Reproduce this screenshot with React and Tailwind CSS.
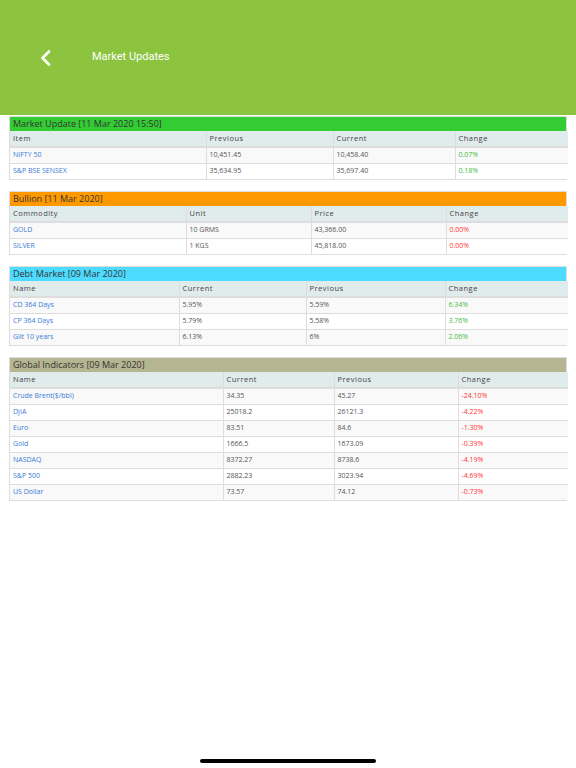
const font = { fontFamily: '"Open Sans", "Noto Sans", sans-serif' }

const sections = [
  {
    title: 'Market Update [11 Mar 2020 15:50]',
    bar: 'bg-[#33cc33]',
    cols: ['w-[196px]', 'w-[127px]', 'w-[122px]', 'w-[113px]'],
    head: ['Item', 'Previous', 'Current', 'Change'],
    rows: [
      ['NIFTY 50', '10,451.45', '10,458.40', '0.07%'],
      ['S&P BSE SENSEX', '35,634.95', '35,697.40', '0.18%'],
    ],
  },
  {
    title: 'Bullion [11 Mar 2020]',
    bar: 'bg-[#ff9900]',
    cols: ['w-[176px]', 'w-[125px]', 'w-[135px]', 'w-[122px]'],
    head: ['Commodity', 'Unit', 'Price', 'Change'],
    rows: [
      ['GOLD', '10 GRMS', '43,366.00', '0.00%'],
      ['SILVER', '1 KGS', '45,818.00', '0.00%'],
    ],
    red: true,
  },
  {
    title: 'Debt Market [09 Mar 2020]',
    bar: 'bg-[#4ddbff]',
    cols: ['w-[169px]', 'w-[127px]', 'w-[139px]', 'w-[123px]'],
    head: ['Name', 'Current', 'Previous', 'Change'],
    rows: [
      ['CD 364 Days', '5.95%', '5.59%', '6.34%'],
      ['CP 364 Days', '5.79%', '5.58%', '3.76%'],
      ['Gilt 10 years', '6.13%', '6%', '2.06%'],
    ],
  },
  {
    title: 'Global Indicators [09 Mar 2020]',
    bar: 'bg-[#b5b591]',
    cols: ['w-[213px]', 'w-[111px]', 'w-[124px]', 'w-[110px]'],
    head: ['Name', 'Current', 'Previous', 'Change'],
    rows: [
      ['Crude Brent($/bbl)', '34.35', '45.27', '-24.10%'],
      ['DJIA', '25018.2', '26121.3', '-4.22%'],
      ['Euro', '83.51', '84.6', '-1.30%'],
      ['Gold', '1666.5', '1673.09', '-0.39%'],
      ['NASDAQ', '8372.27', '8738.6', '-4.19%'],
      ['S&P 500', '2882.23', '3023.94', '-4.69%'],
      ['US Dollar', '73.57', '74.12', '-0.73%'],
    ],
    red: true,
  },
]

function Section({ s }) {
  return (
    <div className="border border-[#dddddd]">
      <div className={`${s.bar} h-[14px] px-[3px] text-[9px] leading-[14px] text-[#333333]`}>{s.title}</div>
      <table className="w-full table-fixed border-collapse text-[7px]">
        <colgroup>
          {s.cols.map((c, i) => (
            <col key={i} className={c} />
          ))}
        </colgroup>
        <thead>
          <tr className="bg-[#e0ebeb]">
            {s.head.map((h, i) => (
              <th
                key={i}
                className="h-[16px] border-b-2 border-l border-[#dddddd] px-[3px] text-left text-[7.5px] font-medium tracking-[0.5px] text-[#444444] first:border-l-0"
              >
                {h}
              </th>
            ))}
          </tr>
        </thead>
        <tbody>
          {s.rows.map((r, ri) => (
            <tr key={ri} className={ri % 2 === 0 ? 'bg-[#f9f9f9]' : 'bg-white'}>
              {r.map((v, ci) => (
                <td
                  key={ci}
                  className={`h-[16px] border-t border-l border-[#dddddd] px-[3px] first:border-l-0 ${
                    ci === 0
                      ? 'text-[#3a7bd5]'
                      : ci === 3
                      ? s.red
                        ? 'text-[#ff3333]'
                        : 'text-[#44bb44]'
                      : 'text-[#555555]'
                  }`}
                >
                  {v}
                </td>
              ))}
            </tr>
          ))}
        </tbody>
      </table>
    </div>
  )
}

export default function App() {
  return (
    <div className="relative h-[768px] w-[576px] bg-white" style={font}>
      <div className="flex h-[115px] items-center bg-[#8cc43f]">
        <svg className="ml-[40px]" width="12" height="16" viewBox="0 0 12 16" fill="none">
          <polyline points="9,1.5 2.5,8 9,14.5" stroke="white" strokeWidth="2.6" strokeLinecap="round" strokeLinejoin="round" />
        </svg>
        <span className="ml-[40px] text-[11px] text-white" style={{ fontFamily: 'Roboto, "Liberation Sans", sans-serif' }}>
          Market Updates
        </span>
      </div>
      <div className="flex flex-col gap-[11px] px-[9px] pt-[1px]">
        {sections.map((s, i) => (
          <Section key={i} s={s} />
        ))}
      </div>
      <div className="absolute bottom-[5px] left-[200px] h-[4px] w-[176px] rounded-full bg-black" />
    </div>
  )
}
